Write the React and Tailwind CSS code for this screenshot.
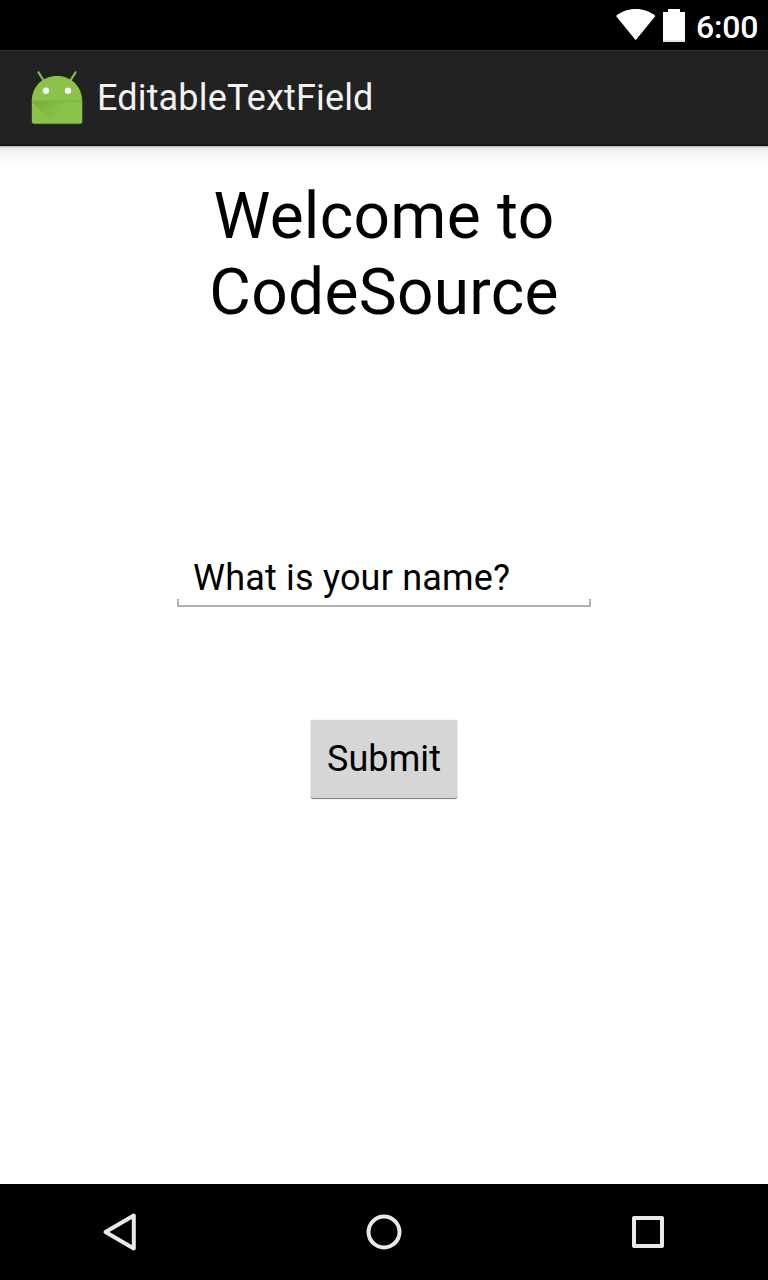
function StatusBar() {
  return (
    <header className="flex h-[50px] items-start justify-end bg-black pr-[10px] text-white">
      <svg className="mt-[9px] h-8 w-10" viewBox="0 0 40 32" fill="#fff">
        <path d="M0 6.9C5.5 2.600 12.200 0 19.700 0s14.200 2.600 19.700 6.900L19.700 31.300Z" />
      </svg>
      <svg className="ml-[7px] mt-[9px] h-[33px] w-[23px]" viewBox="0 0 23 33">
        <path d="M5 0h12v3H22V31H0V3H5Z" fill="#fff" />
        <path d="M0 31h22v2H0Z" fill="#e4e4e4" />
      </svg>
      <span className="ml-[10px] mt-[8px] w-[62px] whitespace-nowrap text-[32px] font-medium leading-[38px] tracking-[-0.15px]">6:00</span>
    </header>
  );
}

function AndroidIcon() {
  return (
    <svg className="h-16 w-16" viewBox="0 0 64 64">
      <defs>
        <linearGradient id="bodyShade" gradientUnits="userSpaceOnUse" x1="14" y1="36" x2="40" y2="60">
          <stop offset="0" stopColor="#6f9f3d" stopOpacity="0.6" />
          <stop offset="1" stopColor="#8bc34a" stopOpacity="0" />
        </linearGradient>
      </defs>
      <path d="M13.500 6.300 18.600 14.500M50.500 6.300 45.400 14.500" stroke="#84b84a" strokeWidth="2.200" strokeLinecap="round" />
      <path d="M6.800 35.500C6.800 20.800 17.500 10 32 10s25.300 10.800 25.300 25.500V55.300a2.500 2.500 0 0 1-2.500 2.500H9.300a2.500 2.500 0 0 1-2.500-2.500Z" fill="#8bc34a" />
      <path d="M7 36H57.300V55.300a2.500 2.500 0 0 1-2.500 2.500H28.500Z" fill="url(#bodyShade)" />
      <path d="M6.800 35.200h50.500" stroke="#78ab40" strokeWidth="1" />
      <path d="M7.200 56.400a2.300 2.300 0 0 0 2.100 1.300H54.800a2.300 2.300 0 0 0 2.100-1.300" stroke="#6b9739" strokeWidth="0.700" fill="none" />
      <circle cx="21" cy="24.700" r="3.200" fill="#f5f5f5" />
      <circle cx="43" cy="24.700" r="3.200" fill="#f5f5f5" />
    </svg>
  );
}

function ActionBar() {
  return (
    <div className="flex h-24 items-center border-b-2 border-t border-b-[#1b1818] border-t-[#303030] bg-[#222222] pl-[25px]">
      <AndroidIcon />
      <h1 className="ml-2 text-[36px] leading-[42px] tracking-[0.16px] text-[#f3f3f3]">EditableTextField</h1>
    </div>
  );
}

function NavBar() {
  return (
    <nav className="flex h-24 items-center justify-between bg-black px-[88px]">
      <button className="h-16 w-16" aria-label="Back">
        <svg className="h-16 w-16" viewBox="0 0 64 64" fill="none" stroke="#e9e9e9" strokeWidth="4" strokeLinejoin="round">
          <path d="M17.500 32 45.800 15.500V48.500Z" />
        </svg>
      </button>
      <button className="h-16 w-16" aria-label="Home">
        <svg className="h-16 w-16" viewBox="0 0 64 64" fill="none" stroke="#e9e9e9" strokeWidth="4">
          <circle cx="32" cy="32" r="15.500" />
        </svg>
      </button>
      <button className="h-16 w-16" aria-label="Recent apps">
        <svg className="h-16 w-16" viewBox="0 0 64 64" fill="none" stroke="#e9e9e9" strokeWidth="4" strokeLinejoin="round">
          <rect x="18" y="18" width="28" height="28" />
        </svg>
      </button>
    </nav>
  );
}

export default function App() {
  return (
    <div className="flex h-[1280px] w-[768px] flex-col overflow-hidden bg-white font-['Roboto',sans-serif] text-black">
      <StatusBar />
      <ActionBar />
      <main className="flex flex-1 flex-col items-center">
        <div className="h-[22px] w-full bg-[linear-gradient(to_bottom,#b0b0b0_0px,#b0b0b0_1px,#e2e2e2_1px,#f0f0f0_4px,#f8f8f8_10px,#ffffff_18px)]" />
        <h2 className="mt-[11px] w-[400px] text-center text-[64px] leading-[76px] tracking-[0.28px]">Welcome to CodeSource</h2>
        <div className="mt-[226px] flex w-[414px] flex-col">
          <div className="h-[42px] pl-4 text-[36px] leading-[42px] tracking-[0.2px]">What is your name?</div>
          <div className="h-2 border-x-2 border-b-2 border-[#b2b2b2]" />
        </div>
        <button className="mt-[113px] h-[78px] w-[146px] rounded-[2px] bg-[#d6d6d6] text-[36px] leading-[42px] tracking-[0.1px] shadow-[0_1px_1px_#777777,0_0_1px_#bbbbbb]">
          Submit
        </button>
      </main>
      <NavBar />
    </div>
  );
}
